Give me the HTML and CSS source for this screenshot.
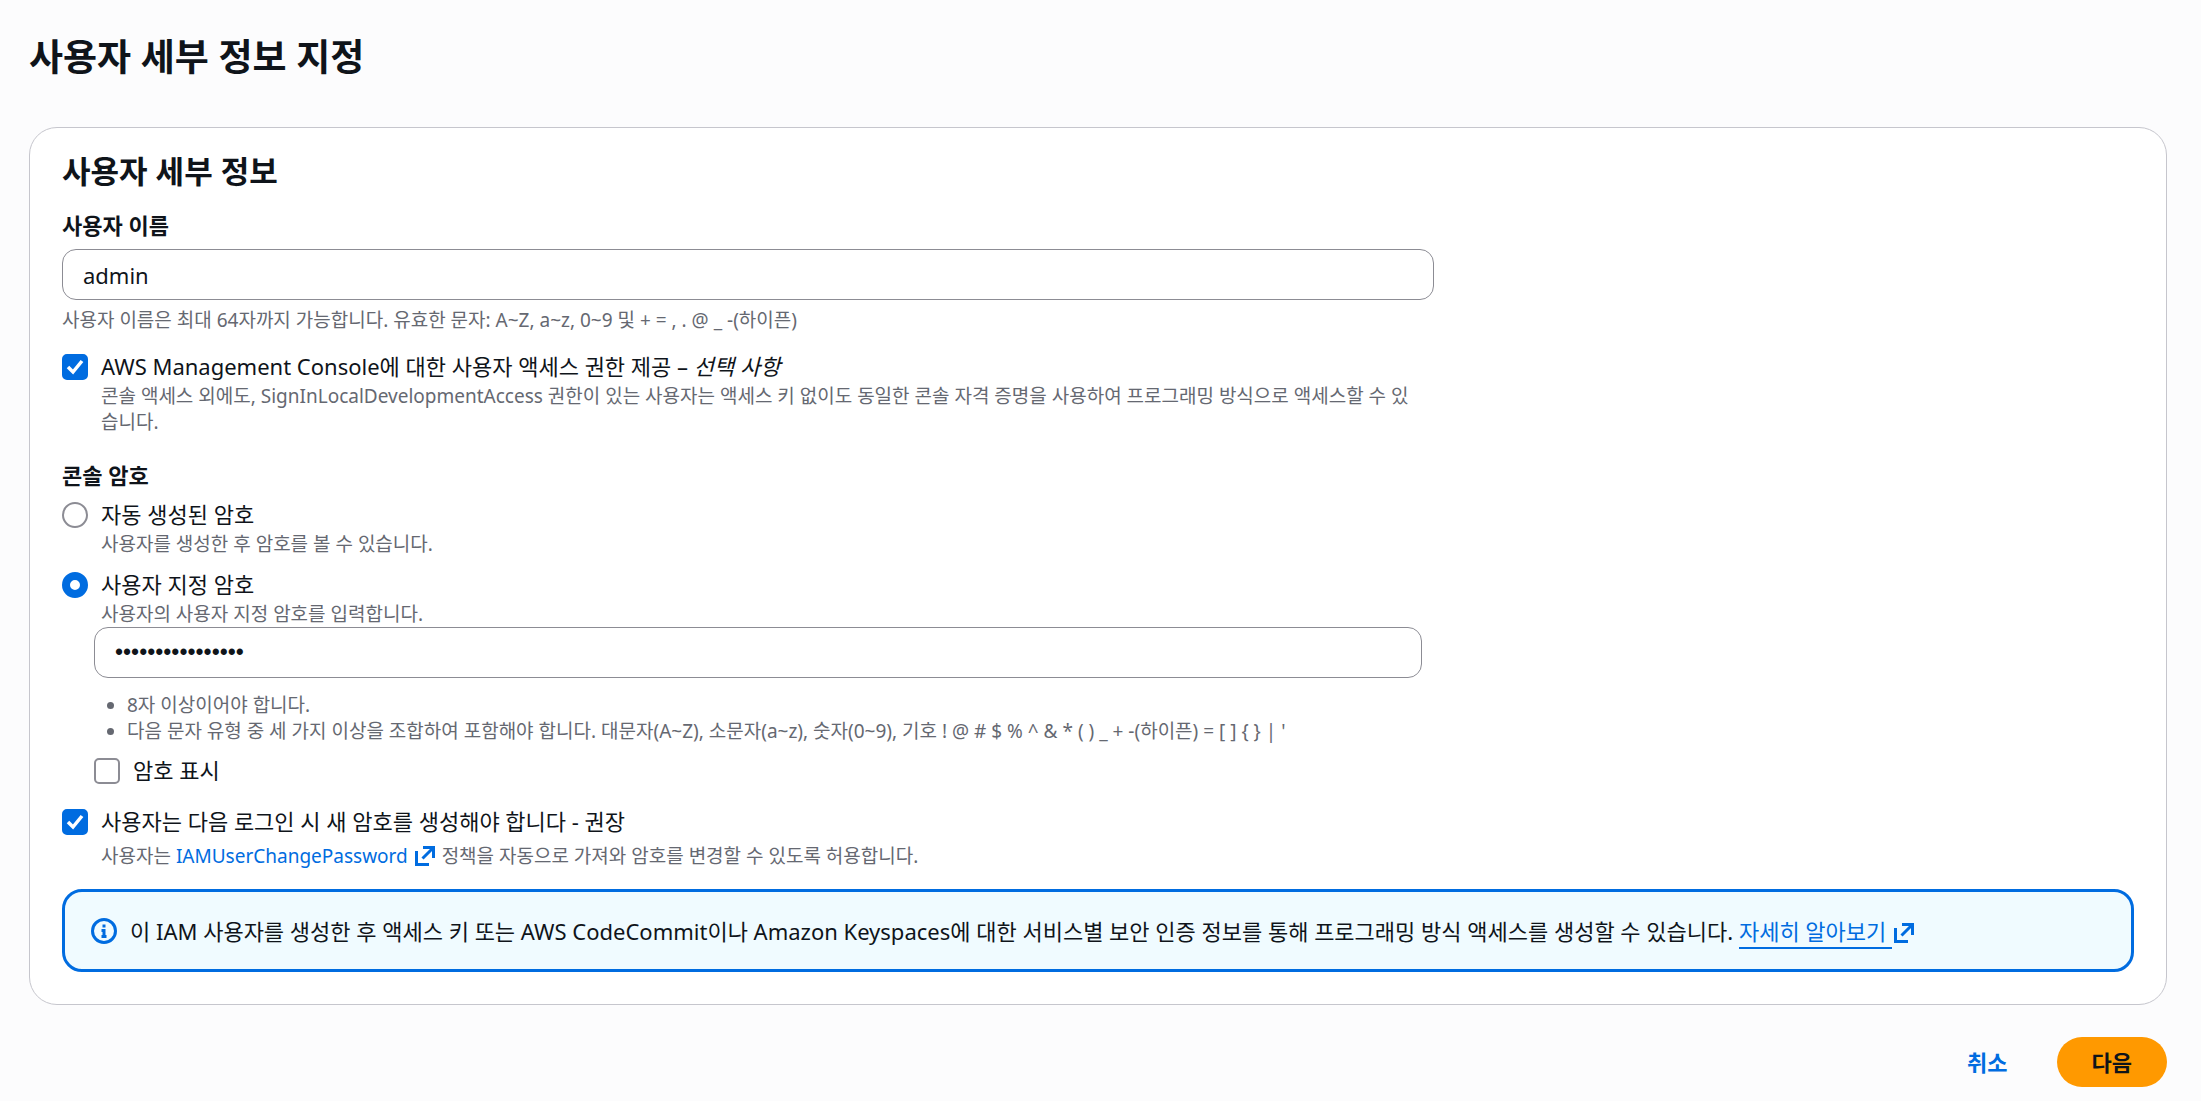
FILE: index.html
```html
<!doctype html>
<html lang="ko">

<head>
	<meta charset="utf-8">
	<title>사용자 세부 정보 지정</title>
	<link rel="stylesheet" href="styles.css">
</head>

<body>
	<svg class="symbols" aria-hidden="true">
		<symbol id="external" viewBox="0 0 20 20">
			<path d="M1.500 5v13.500H14M8 1.500h10.500V12M18 2L7.500 12.500" />
		</symbol>
	</svg>

	<main class="page">
		<h1>사용자 세부 정보 지정</h1>

		<form>
			<section class="card">
				<h2>사용자 세부 정보</h2>

				<div class="column">
					<label class="field-label" for="username">사용자 이름</label>
					<input class="text-input" id="username" type="text" value="admin">
					<p class="hint name-hint">사용자 이름은 최대 64자까지 가능합니다. 유효한 문자: A~Z, a~z, 0~9 및 + = , . @ _ -(하이픈)</p>

					<div class="option console-access">
						<input id="console" type="checkbox" checked>
						<div>
							<label for="console">AWS Management Console에 대한 사용자 액세스 권한 제공 – <i>선택 사항</i></label>
							<p class="hint">콘솔 액세스 외에도, SignInLocalDevelopmentAccess 권한이 있는 사용자는 액세스 키 없이도 동일한 콘솔 자격 증명을 사용하여 프로그래밍 방식으로 액세스할 수 있습니다.</p>
						</div>
					</div>

					<fieldset>
						<legend class="field-label">콘솔 암호</legend>
						<div class="option">
							<input id="auto" type="radio" name="password-type">
							<div>
								<label for="auto">자동 생성된 암호</label>
								<p class="hint">사용자를 생성한 후 암호를 볼 수 있습니다.</p>
							</div>
						</div>
						<div class="option">
							<input id="custom" type="radio" name="password-type" checked>
							<div>
								<label for="custom">사용자 지정 암호</label>
								<p class="hint">사용자의 사용자 지정 암호를 입력합니다.</p>
							</div>
						</div>
					</fieldset>

					<div class="password">
						<input class="text-input" id="password" type="password" value="abcdefgh12345678" aria-label="사용자 지정 암호">
						<ul class="hint">
							<li>8자 이상이어야 합니다.</li>
							<li>다음 문자 유형 중 세 가지 이상을 조합하여 포함해야 합니다. 대문자(A~Z), 소문자(a~z), 숫자(0~9), 기호 ! @ # $ % ^ &amp; * ( ) _ + -(하이픈) = [ ] { } | '</li>
						</ul>
						<div class="option">
							<input id="show" type="checkbox">
							<label for="show">암호 표시</label>
						</div>
					</div>

					<div class="option">
						<input id="reset" type="checkbox" checked>
						<div>
							<label for="reset">사용자는 다음 로그인 시 새 암호를 생성해야 합니다 - 권장</label>
							<p class="hint reset-hint">사용자는 <a href="#">IAMUserChangePassword <svg class="external"><use href="#external" /></svg></a> 정책을 자동으로 가져와 암호를 변경할 수 있도록 허용합니다.</p>
						</div>
					</div>
				</div>

				<div class="alert">
					<svg class="info" viewBox="0 0 26 26" aria-hidden="true">
						<circle cx="13" cy="13" r="11.5" />
						<path d="M13 6.500v3M10.500 12.500H13V19M10.500 18.500h5" />
					</svg>
					<p>이 IAM 사용자를 생성한 후 액세스 키 또는 AWS CodeCommit이나 Amazon Keyspaces에 대한 서비스별 보안 인증 정보를 통해 프로그래밍 방식 액세스를 생성할 수 있습니다. <a href="#"><span class="underlined">자세히 알아보기&nbsp;</span><svg class="external"><use href="#external" /></svg></a></p>
				</div>
			</section>

			<div class="actions">
				<button class="cancel" type="button">취소</button>
				<button class="next" type="submit">다음</button>
			</div>
		</form>
	</main>
</body>

</html>
```

FILE: styles.css
```css
:root {
	--text: #0f141a;
	--hint: #656871;
	--blue: #006ce0;
	--line: #8c8c94;
}

* {
	box-sizing: border-box;
}

body {
	margin: 0;
	background: #fcfcfd;
	color: var(--text);
	font-family: "Noto Sans", "Noto Sans CJK KR", sans-serif;
	font-size: 22px;
	line-height: 26px;
}

h1,
h2,
p,
ul,
fieldset {
	margin: 0;
	padding: 0;
	border: 0;
}

.symbols {
	display: none;
}

.page {
	padding: 32px 34px 14px 29px;
}

h1 {
	margin-bottom: 45px;
	font-size: 37px;
	line-height: 50px;
}

h2 {
	margin-bottom: 19px;
	font-size: 31px;
	line-height: 44px;
}

.card {
	padding: 21px 32px 32px;
	border: 1px solid #c6c6cd;
	border-radius: 28px;
	background: #fff;
}

.column {
	width: 66.2%;
}

.field-label {
	display: block;
	padding: 0;
	font-weight: 700;
}

.text-input {
	display: block;
	width: 100%;
	height: 51px;
	padding: 0 20px;
	border: 1px solid var(--line);
	border-radius: 14px;
	background: #fff;
	color: var(--text);
	font: inherit;
}

#username {
	margin-top: 11px;
}

#password {
	font-family: "Liberation Sans", sans-serif;
	font-size: 23px;
}

.hint {
	color: var(--hint);
	font-size: 19px;
	line-height: 26px;
}

.name-hint {
	margin-top: 7px;
}

.option {
	display: flex;
	align-items: flex-start;
	gap: 13px;
}

.option label {
	display: block;
}

.option .hint {
	margin-top: 4px;
}

.option input {
	appearance: none;
	flex: none;
	width: 26px;
	height: 26px;
	margin: 1px 0;
	border: 2px solid var(--line);
	background: #fff;
}

.option input[type="checkbox"] {
	border-radius: 5px;
}

.option input[type="checkbox"]:checked {
	border-color: var(--blue);
	background: var(--blue) url("data:image/svg+xml,%3Csvg xmlns='http://www.w3.org/2000/svg' viewBox='0 0 26 26'%3E%3Cpath d='M6 13l5 5 9-11' fill='none' stroke='white' stroke-width='3.500'/%3E%3C/svg%3E") center / 26px no-repeat;
}

.option input[type="radio"] {
	border-radius: 50%;
}

.option input[type="radio"]:checked {
	border: 8px solid var(--blue);
}

.console-access {
	margin: 20px 0 27px;
	padding-right: 12px;
}

fieldset .option {
	margin-top: 13px;
}

fieldset .option + .option {
	margin-top: 14px;
}

.password {
	margin: 0 12px 23px 32px;
}

.password ul {
	margin: 14px 0 13px;
	padding-left: 33px;
}

.option .reset-hint {
	margin-top: 9px;
}

a {
	color: var(--blue);
	text-decoration: none;
}

.underlined {
	padding-bottom: 1px;
	border-bottom: 2px solid var(--blue);
}

.external {
	width: 20px;
	height: 20px;
	margin: 0 2px;
	fill: none;
	stroke: currentColor;
	stroke-width: 3;
	vertical-align: -3px;
}

.alert {
	display: flex;
	align-items: center;
	gap: 13px;
	min-height: 83px;
	margin-top: 20px;
	padding: 24px 26px;
	border: 3px solid var(--blue);
	border-radius: 20px;
	background: #f0fbff;
}

.info {
	flex: none;
	width: 26px;
	height: 26px;
	fill: none;
	stroke: var(--blue);
	stroke-width: 3;
}

.actions {
	display: flex;
	justify-content: flex-end;
	gap: 14px;
	margin-top: 32px;
}

button {
	height: 50px;
	padding: 0 35px;
	border: 0;
	border-radius: 25px;
	background: none;
	font: inherit;
	font-weight: 700;
}

.cancel {
	color: var(--blue);
}

.next {
	background: #ff9900;
	color: var(--text);
}
```
